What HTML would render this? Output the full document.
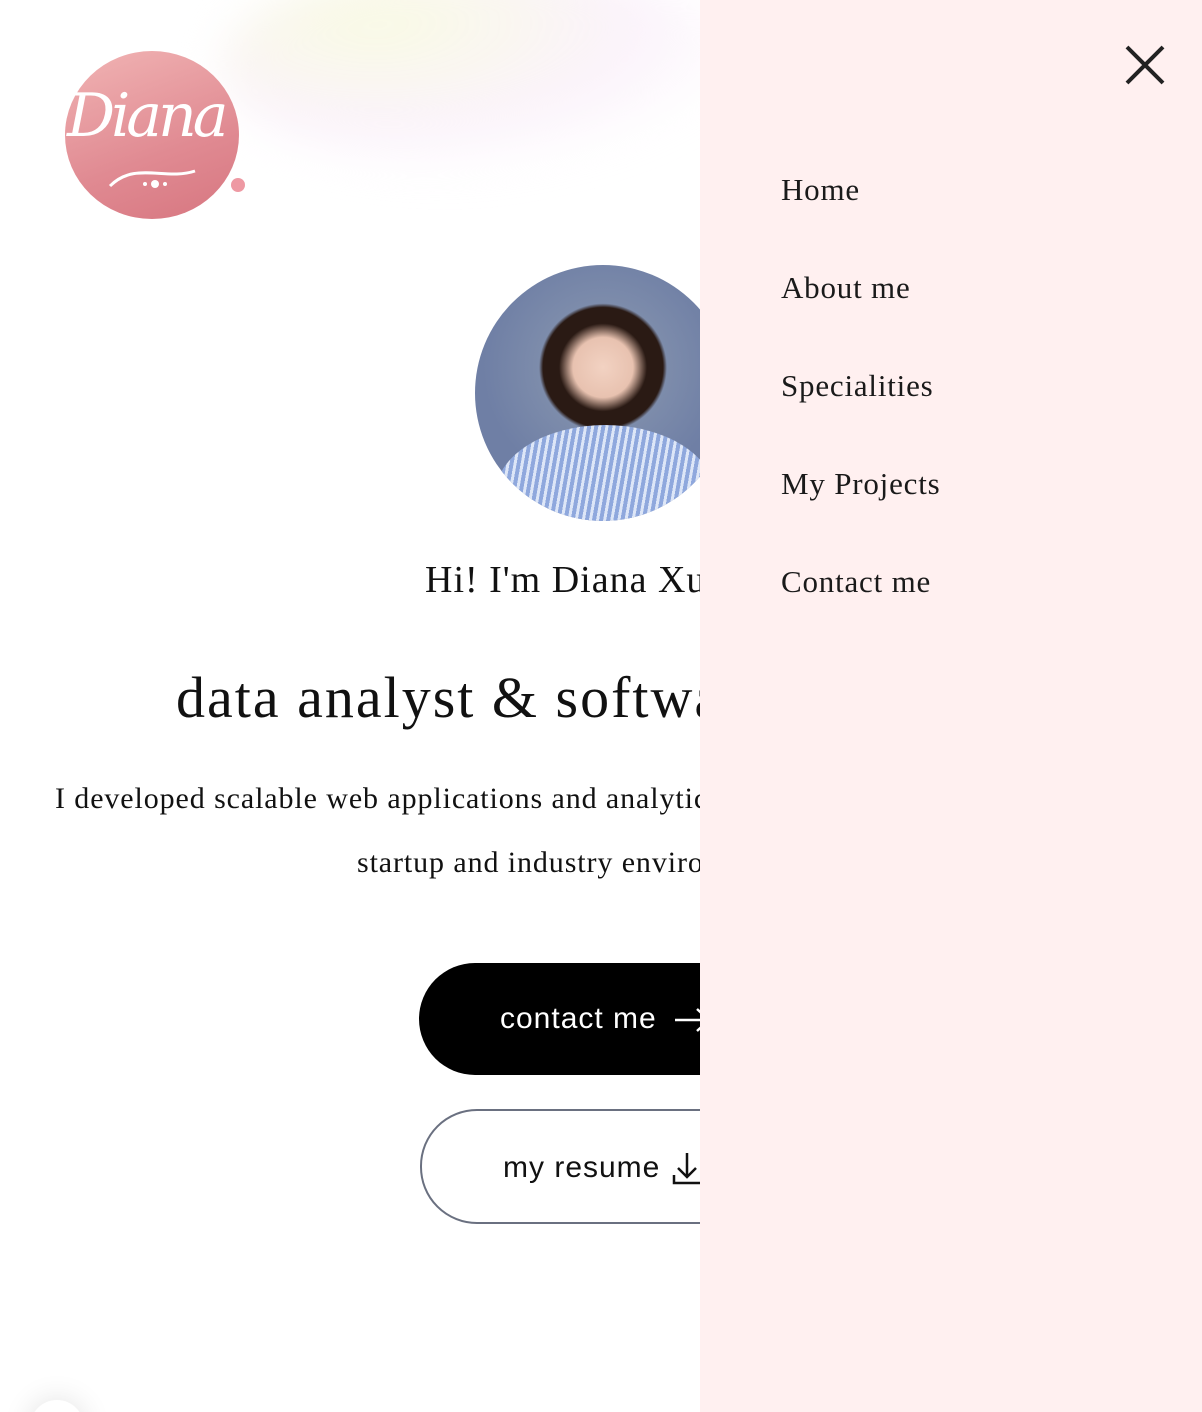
<!DOCTYPE html>
<html><head><meta charset="utf-8"><style>
html,body{margin:0;padding:0;width:1202px;height:1412px;overflow:hidden;background:#fff;font-family:"Liberation Serif",serif;}
#w{position:relative;width:1202px;height:1412px;overflow:hidden;}
.blob{position:absolute;left:220px;top:-40px;width:520px;height:210px;border-radius:50%;background:radial-gradient(ellipse at 30% 30%,rgba(248,250,225,.9),rgba(250,240,250,.8) 50%,rgba(255,255,255,0) 75%);filter:blur(20px);}
.logo{position:absolute;left:65px;top:51px;width:174px;height:168px;border-radius:50%;background:linear-gradient(160deg,#f1b4b4,#e08a92 60%,#d77680);}
.logo span{position:absolute;left:2px;top:30px;font-family:"DejaVu Serif",serif;font-style:italic;font-size:60px;color:#fff;letter-spacing:-4px;}
.dot{position:absolute;left:231px;top:178px;width:14px;height:14px;border-radius:50%;background:#ee99a3;}
.photo{position:absolute;left:475px;top:265px;width:256px;height:256px;border-radius:50%;background:radial-gradient(circle at 50% 40%,#f2d2c2 0,#e8c2b0 15%,#2a1a14 22%,#2a1a14 30%,#7d8cab 32%,#6f7fa5 60%);overflow:hidden;}
.photo:after{content:"";position:absolute;left:20px;top:160px;width:220px;height:140px;border-radius:50% 50% 0 0;background:repeating-linear-gradient(100deg,#8fa8dd 0 4px,#dde6f7 4px 7px);}
.t{position:absolute;white-space:nowrap;color:#111;}
.btn1{position:absolute;left:419px;top:963px;width:400px;height:112px;border-radius:56px;background:#000;color:#fff;font-family:"Liberation Sans",sans-serif;font-size:30px;letter-spacing:1px;}
.btn2{position:absolute;left:420px;top:1109px;width:400px;height:115px;border-radius:57px;border:2px solid #6a7080;box-sizing:border-box;font-family:"Liberation Sans",sans-serif;font-size:30px;color:#111;letter-spacing:1px;}
.panel{position:absolute;left:700px;top:0;width:502px;height:1412px;background:#fff0f0;}
.nav{position:absolute;left:81px;font-size:31px;color:#1a1a1a;letter-spacing:0.8px;}
</style></head><body><div id="w">
<div class="blob"></div>
<div class="logo"><span>Diana</span>
<svg style="position:absolute;left:40px;top:100px" width="120" height="50"><path d="M5 35C30 10 60 30 90 20" stroke="#fff" stroke-width="3" fill="none"/><circle cx="50" cy="33" r="4" fill="#fff"/><circle cx="40" cy="33" r="2" fill="#fff"/><circle cx="60" cy="33" r="2" fill="#fff"/></svg></div>
<div class="dot"></div>
<div class="photo"></div>
<div class="t" style="left:425px;top:558px;font-size:38px;letter-spacing:1px;">Hi! I'm Diana Xu</div>
<div class="t" style="left:176px;top:664px;font-size:58px;letter-spacing:2px;">data analyst &amp; software</div>
<div class="t" style="left:55px;top:782px;font-size:30px;letter-spacing:0.9px;">I developed scalable web applications and analytics</div>
<div class="t" style="left:357px;top:846px;font-size:30px;letter-spacing:0.9px;">startup and industry environments</div>
<div class="btn1"><span style="position:absolute;left:81px;top:39px;">contact me</span>
<svg style="position:absolute;left:254px;top:44px" width="40" height="26"><path d="M2 13H36M24 2L36 13L24 24" stroke="#fff" stroke-width="2.5" fill="none"/></svg></div>
<div class="btn2"><span style="position:absolute;left:81px;top:40px;">my resume</span>
<svg style="position:absolute;left:250px;top:40px" width="34" height="36"><path d="M15 2V26M6 17L15 26L24 17M2 24V32H30V24" stroke="#111" stroke-width="2.5" fill="none"/></svg></div>
<div style="position:absolute;left:30px;top:1400px;width:54px;height:54px;border-radius:50%;background:#fff;box-shadow:0 0 30px rgba(0,0,0,.12);"></div>
<div class="panel">
<svg style="position:absolute;left:424px;top:44px" width="42" height="42" viewBox="0 0 42 42"><path d="M3 3L39 39M39 3L3 39" stroke="#222" stroke-width="4"/></svg>
<div class="nav" style="top:172px">Home</div>
<div class="nav" style="top:270px">About me</div>
<div class="nav" style="top:368px">Specialities</div>
<div class="nav" style="top:466px">My Projects</div>
<div class="nav" style="top:564px">Contact me</div>
</div>
</div></body></html>
